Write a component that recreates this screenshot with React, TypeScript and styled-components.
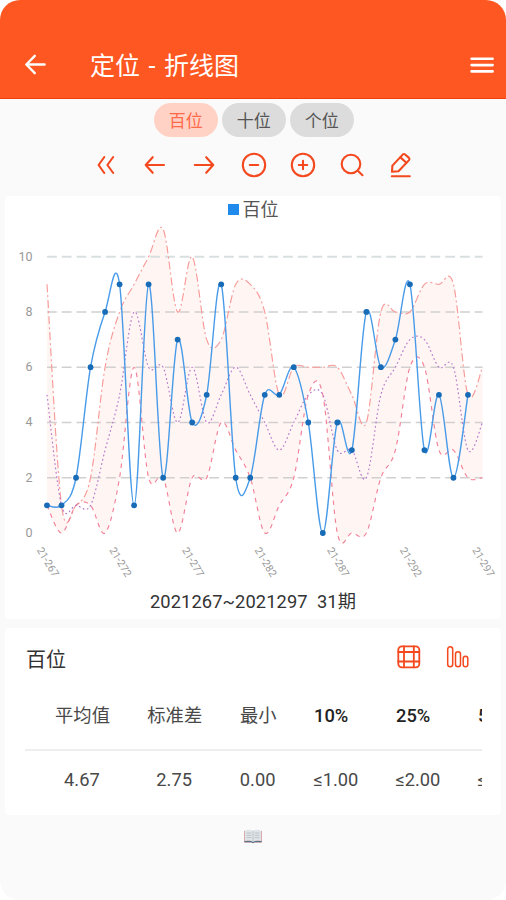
import React from 'react';
import styled, { createGlobalStyle } from 'styled-components';

const GlobalStyle = createGlobalStyle`
  *, *::before, *::after { box-sizing: border-box; }
  html, body { margin: 0; padding: 0; background: #fff; }
  body { font-family: Roboto, "Noto Sans CJK SC", sans-serif; }
`;

const Screen = styled.main`
  width: 506px;
  height: 900px;
  display: flex;
  flex-direction: column;
  align-items: center;
  background: #fafafa;
  border-radius: 20px;
  overflow: hidden;
`;

const Header = styled.header`
  width: 100%;
  height: 99px;
  flex: none;
  display: flex;
  align-items: center;
  padding: 31px 12px 0 24px;
  background: #ff5722;
  border-bottom: 1.5px solid #ee3f0c;
`;

const Title = styled.h1`
  flex: 1;
  margin: 0 0 0 43px;
  padding-top: 4px;
  color: #fff;
  font-size: 25px;
  font-weight: 400;
  line-height: 30px;
  white-space: pre;
  word-spacing: 2.4px;
`;

const Tabs = styled.nav`
  display: flex;
  gap: 4.5px;
  margin-top: 4px;
  padding-left: 1.5px;
`;

const Tab = styled.button<{ $active?: boolean }>`
  width: 63.5px;
  height: 34px;
  padding: 2px 0 0;
  border: 0;
  border-radius: 17px;
  background: ${({ $active }) => ($active ? '#ffd2c5' : '#dcdcdc')};
  color: ${({ $active }) => ($active ? '#ff6a4a' : '#555')};
  font-family: inherit;
  font-size: 17px;
  line-height: 32px;
`;

const Toolbar = styled.div`
  height: 59px;
  display: grid;
  grid-template-columns: repeat(7, 49.2px);
  align-items: center;
  justify-items: center;
  padding: 0 0 3px 1.2px;
`;

const IconSvg = styled.svg<{ $size?: number }>`
  display: block;
  width: ${({ $size = 24 }) => $size}px;
  height: ${({ $size = 24 }) => $size}px;
  flex: none;
  fill: none;
  stroke: currentColor;
  stroke-width: 2.1;
  stroke-linecap: round;
  stroke-linejoin: round;
`;

const ToolButton = styled.button`
  display: grid;
  padding: 0;
  border: 0;
  background: none;
  color: #f4481e;
`;

const HeaderButton = styled(ToolButton)`
  color: #fff;
`;

const Card = styled.section<{ $height: number }>`
  width: 496px;
  height: ${({ $height }) => $height}px;
  flex: none;
  display: flex;
  flex-direction: column;
  background: #fff;
  border-radius: 4px;
`;

const ChartCard = styled(Card)`
  align-items: center;
`;

const StatsCard = styled(Card)`
  margin-top: 9px;
  padding: 0 19px 0 20px;
`;

const Legend = styled.div`
  height: 27px;
  display: flex;
  align-items: center;
  gap: 4px;
  color: #555;
  font-size: 18px;
  line-height: 27px;
`;

const LegendMark = styled.span`
  width: 11px;
  height: 11px;
  background: #218bed;
`;

const ChartSvg = styled.svg`
  display: block;
  width: 496px;
  height: 363px;
  font-family: Roboto, sans-serif;
`;

const Period = styled.div`
  color: #333;
  font-size: 18.3px;
  line-height: 31px;
  letter-spacing: 0.1px;
  white-space: pre;
`;

const StatsHead = styled.div`
  height: 58px;
  display: flex;
  align-items: center;
  padding: 0 12px 0 1px;
`;

const StatsTitle = styled.h2`
  flex: 1;
  margin: 0;
  padding-top: 2px;
  color: #333;
  font-size: 20px;
  font-weight: 400;
`;

const StatsActions = styled.div`
  display: flex;
  gap: 25.5px;
`;

const Table = styled.div`
  overflow: hidden;
`;

const Row = styled.div<{ $head?: boolean }>`
  height: ${({ $head }) => ($head ? 65 : 58)}px;
  display: grid;
  grid-template-columns: 55px 55.5px 37.5px 45px 45px 45px;
  column-gap: 37px;
  padding-left: ${({ $head }) => ($head ? 30 : 29.4)}px;
  padding-bottom: ${({ $head }) => ($head ? 3 : 0)}px;
  align-items: center;
  border-bottom: ${({ $head }) => ($head ? '2px solid #eeeeee' : '0')};
`;

const Cell = styled.span<{ $left?: boolean; $strong?: boolean }>`
  text-align: ${({ $left }) => ($left ? 'left' : 'center')};
  color: ${({ $strong }) => ($strong ? '#222' : '#484848')};
  font-size: 18.3px;
  font-weight: ${({ $strong }) => ($strong ? 500 : 400)};
  line-height: 26px;
  white-space: nowrap;
`;

const Footer = styled.footer`
  margin-top: 14px;
`;

const BookSvg = styled.svg`
  display: block;
  width: 20px;
  height: 15px;
`;

const upper = [9, 1, 1, 2, 6, 8, 9, 10, 11, 8, 10, 7, 7, 9, 9, 8, 5, 6, 6, 6, 6, 5, 4, 8, 8, 8, 9, 9, 9, 5, 6];
const lower = [1, 0, 1, 1, 0, 2, 6, 2, 2, 0, 2, 2, 4, 3, 2, 0, 1, 2, 5, 5, 0, 0, 0, 2, 3, 6, 6, 3, 3, 2, 2];
const median = [5, 1, 1, 1, 3, 5, 8, 6, 6, 4, 6, 4, 5, 6, 5, 4, 3, 4, 5, 5, 3, 3, 2, 5, 6, 7, 7, 6, 6, 3, 4];
const digits = [1, 1, 2, 6, 8, 9, 1, 9, 2, 7, 4, 5, 9, 2, 2, 5, 5, 6, 4, 0, 4, 3, 8, 6, 7, 9, 3, 5, 2, 5];

const LEFT = 42;
const RIGHT = 477.5;
const px = (i: number) => LEFT + i * ((RIGHT - LEFT) / 30);
const py = (v: number) => 310 - v * 27.63;

type Point = [number, number];
const toPoints = (values: number[]): Point[] => values.map((v, i) => [px(i), py(v)]);

// Catmull-Rom spline written as cubic Bézier segments.
function spline(points: Point[]) {
  return points
    .slice(0, -1)
    .map((p, i) => {
      const q = points[i + 1];
      const before = points[i - 1] ?? p;
      const after = points[i + 2] ?? q;
      const c = [
        p[0] + (q[0] - before[0]) / 6,
        p[1] + (q[1] - before[1]) / 6,
        q[0] - (after[0] - p[0]) / 6,
        q[1] - (after[1] - p[1]) / 6,
        q[0],
        q[1],
      ];
      return 'C' + c.map((n) => n.toFixed(2)).join(' ');
    })
    .join('');
}

const curve = (values: number[]) => {
  const points = toPoints(values);
  return `M${points[0].join(' ')}${spline(points)}`;
};

const band = (() => {
  const back = toPoints(lower).reverse();
  return `${curve(upper)}L${back[0].join(' ')}${spline(back)}Z`;
})();

function LineChart() {
  return (
    <ChartSvg viewBox="0 0 496 363">
      <path d={band} fill="#ff5030" fillOpacity={0.06} />
      {[2, 4, 6, 8, 10].map((v) => (
        <line
          key={v}
          x1={LEFT}
          x2={RIGHT}
          y1={py(v)}
          y2={py(v)}
          stroke={v === 10 ? '#d9dfe0' : '#d1cfcf'}
          strokeWidth={v === 10 ? 2 : 1.5}
          strokeDasharray="9.8 4.95"
        />
      ))}
      {[0, 2, 4, 6, 8, 10].map((v) => (
        <text key={v} x={27.5} y={py(v) + 4} textAnchor="end" fontSize={12.5} fill="#999">
          {v}
        </text>
      ))}
      <g fill="none" strokeWidth={1.15}>
        <path d={curve(upper)} stroke="#f79a98" strokeDasharray="8 3 2 3" />
        <path d={curve(lower)} stroke="#f28198" strokeDasharray="4.5 4.5" />
        <path d={curve(median)} stroke="#b577cc" strokeDasharray="1.7 2.6" />
        <path d={curve(digits)} stroke="#489be8" strokeWidth={1.4} />
      </g>
      {toPoints(digits).map(([x, y]) => (
        <circle key={x} cx={x} cy={y} r={2.9} fill="#176bb7" />
      ))}
      {[267, 272, 277, 282, 287, 292, 297].map((n, i) => (
        <text
          key={n}
          transform={`translate(${px(i * 5) - 10.5} ${327}) rotate(59)`}
          fontSize={10.5}
          fill="#999"
        >
          21-{n}
        </text>
      ))}
    </ChartSvg>
  );
}

const toolIcons = [
  { label: '首页', art: <path d="M10.3 4 4.6 12l5.7 8M19.2 4l-5.8 8 5.8 8" /> },
  { label: '后退', art: <path d="M21 12H3M9.7 4.2 2.7 12l7 7.8" /> },
  { label: '前进', art: <path d="M2.8 12H21M14.2 4.2l7 7.8-7 7.8" /> },
  { label: '缩小', art: <><circle cx="12" cy="12" r="11.2" /><path d="M7.8 12h8.4" /></> },
  { label: '放大', art: <><circle cx="12" cy="12" r="11.2" /><path d="M7.8 12h8.4M12 7.8v8.4" /></> },
  { label: '搜索', art: <><circle cx="11" cy="11" r="9.3" /><path d="m17.8 17.8 4.7 4.4" /></> },
  {
    label: '编辑',
    art: (
      <>
        <path d="M3 18.8 3.4 12.6 13.7 1.6Q14.9.5 16.1 1.5L20 4.9Q21 5.9 20 7.1L9.5 18.2Z" />
        <path d="m11.4 4.4 6 5.4M2.8 23.2h18" />
      </>
    ),
  },
];

const columns = [
  { head: '平均值', value: '4.67' },
  { head: '标准差', value: '2.75' },
  { head: '最小', value: '0.00' },
  { head: '10%', value: '≤1.00', left: true },
  { head: '25%', value: '≤2.00', left: true },
  { head: '50%', value: '≤5.00', left: true },
];

export default function App() {
  return (
    <>
      <GlobalStyle />
      <Screen>
        <Header>
          <HeaderButton aria-label="返回">
            <IconSvg $size={23} viewBox="0 0 23 23">
              <g strokeWidth="2.4">
                <path d="M20.6 11.5H3M10.8 2.8 2.3 11.5l8.5 8.7" />
              </g>
            </IconSvg>
          </HeaderButton>
          <Title>定位 - 折线图</Title>
          <HeaderButton aria-label="菜单">
            <IconSvg $size={24} viewBox="0 0 24 24">
              <g strokeWidth="2.6">
                <path d="M1.6 5.8h21M1.6 12.1h21M1.6 18.4h21" />
              </g>
            </IconSvg>
          </HeaderButton>
        </Header>

        <Tabs>
          <Tab $active>百位</Tab>
          <Tab>十位</Tab>
          <Tab>个位</Tab>
        </Tabs>

        <Toolbar>
          {toolIcons.map(({ label, art }) => (
            <ToolButton key={label} aria-label={label}>
              <IconSvg viewBox="0 0 24 24" overflow="visible">{art}</IconSvg>
            </ToolButton>
          ))}
        </Toolbar>

        <ChartCard $height={423}>
          <Legend>
            <LegendMark />
            百位
          </Legend>
          <LineChart />
          <Period>2021267~2021297  31期</Period>
        </ChartCard>

        <StatsCard $height={187}>
          <StatsHead>
            <StatsTitle>百位</StatsTitle>
            <StatsActions>
              <ToolButton aria-label="表格">
                <IconSvg viewBox="0 0 24 24">
                  <g strokeWidth="1.8">
                    <rect x="1.3" y="1.3" width="21" height="21" rx="3.5" />
                    <path d="M7 1.3v21M16.8 1.3v21M1.3 7h21M1.3 16.5h21" />
                  </g>
                </IconSvg>
              </ToolButton>
              <ToolButton aria-label="柱状图">
                <IconSvg viewBox="0 0 24 24">
                  <g strokeWidth="1.5">
                    <rect x="1.7" y="1.8" width="5" height="20" rx="2.5" />
                    <rect x="9.5" y="6.8" width="5" height="15" rx="2.5" />
                    <rect x="17.2" y="11.3" width="4.6" height="10.5" rx="2.3" />
                  </g>
                </IconSvg>
              </ToolButton>
            </StatsActions>
          </StatsHead>
          <Table>
            <Row $head>
              {columns.map(({ head, left }) => (
                <Cell key={head} $left={left} $strong={left}>{head}</Cell>
              ))}
            </Row>
            <Row>
              {columns.map(({ head, value, left }) => (
                <Cell key={head} $left={left}>{value}</Cell>
              ))}
            </Row>
          </Table>
        </StatsCard>

        <Footer>
          <BookSvg viewBox="0 0 20 15">
            <path d="M1 2v11.5h18V2z" fill="#d98f93" />
            <path d="M1.5 12.7h7l1.5.8 1.5-.8h7" stroke="#55748c" strokeWidth="1.2" fill="none" />
            <path d="M1.7 1.5Q6-.2 10 1.8 14-.2 18.3 1.5V12Q14 10.8 10 12.8 6 10.8 1.7 12z" fill="#dfe4e8" />
            <path d="M10 2v10.5M3.5 4h4.8M3.5 6.3h4.8M3.5 8.6h4.8M11.7 4h4.8M11.7 6.3h4.8M11.7 8.6h4.8" stroke="#b4bcc2" strokeWidth=".8" />
          </BookSvg>
        </Footer>
      </Screen>
    </>
  );
}
